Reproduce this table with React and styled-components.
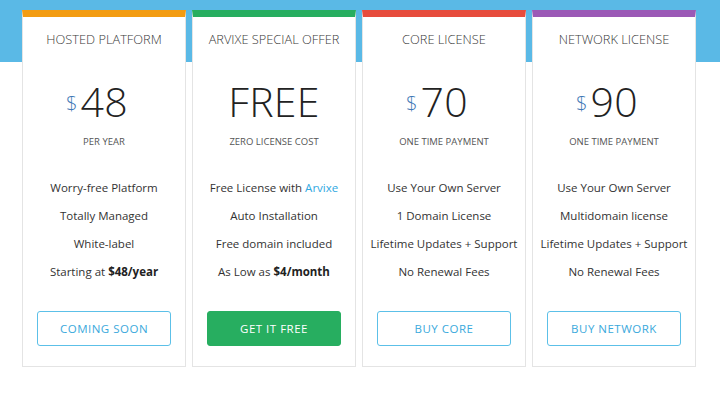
import React from "react";
import styled, { createGlobalStyle } from "styled-components";

const Global = createGlobalStyle`
  html, body { margin: 0; padding: 0; background: #fff; }
  body { font-family: "Open Sans", "Liberation Sans", sans-serif; }
`;

const Page = styled.div`
  width: 720px;
  height: 395px;
  background: linear-gradient(to bottom, #5ab9e6 0, #5ab9e6 62px, #ffffff 62px);
  padding: 10px 0 0 22px;
  box-sizing: border-box;
`;

const Row = styled.div`
  display: flex;
  gap: 6px;
  align-items: flex-start;
`;

const Card = styled.div`
  width: 164px;
  height: 357px;
  box-sizing: border-box;
  background: #fff;
  border: 1px solid #e4e4e4;
  border-top: 7px solid ${(p) => p.$accent};
  display: flex;
  flex-direction: column;
  align-items: center;
  padding: 0 14px;
`;

const Title = styled.div`
  margin-top: 13px;
  font-size: 12.8px;
  font-weight: 300;
  color: #3a3a3a;
  line-height: 18px;
  white-space: nowrap;
`;

const Price = styled.div`
  margin-top: 27px;
  display: flex;
  align-items: center;
  height: 52px;
  color: #222;
`;

const Currency = styled.span`
  font-size: 20px;
  font-weight: 300;
  color: #3f77b5;
  margin-top: 5px;
  margin-left: -14px;
  margin-right: 3px;
`;

const Amount = styled.span`
  font-size: 41px;
  font-weight: 300;
  line-height: 52px;
  letter-spacing: 0.3px;
`;

const Sub = styled.div`
  margin-top: 9px;
  font-size: 9.5px;
  color: #555;
  text-transform: uppercase;
  line-height: 12px;
`;

const Features = styled.ul`
  list-style: none;
  margin: 31px 0 0;
  padding: 0;
  display: flex;
  flex-direction: column;
  gap: 11px;
  align-items: center;
`;

const Feature = styled.li`
  font-size: 11.5px;
  line-height: 17px;
  color: #333;
  white-space: nowrap;
  b { font-weight: 700; color: #222; }
`;

const Link = styled.a`
  color: #2fa8df;
  text-decoration: none;
`;

const Button = styled.button`
  margin-top: 31px;
  width: 134px;
  height: 35px;
  box-sizing: border-box;
  border-radius: 3px;
  font-family: "Open Sans", "Liberation Sans", sans-serif;
  font-size: 11.5px;
  letter-spacing: 0.5px;
  text-transform: uppercase;
  cursor: pointer;
  border: 1px solid ${(p) => (p.$solid ? "#27ae60" : "#5cc0e8")};
  background: ${(p) => (p.$solid ? "#27ae60" : "#fff")};
  color: ${(p) => (p.$solid ? "#fff" : "#3aa9dc")};
`;

const plans = [
  {
    accent: "#f39c12",
    title: "HOSTED PLATFORM",
    currency: "$",
    amount: "48",
    sub: "PER YEAR",
    features: [
      "Worry-free Platform",
      "Totally Managed",
      "White-label",
      <>Starting at <b>$48/year</b></>,
    ],
    button: "Coming Soon",
  },
  {
    accent: "#27ae60",
    title: "ARVIXE SPECIAL OFFER",
    amount: "FREE",
    sub: "ZERO LICENSE COST",
    features: [
      <>Free License with <Link href="#">Arvixe</Link></>,
      "Auto Installation",
      "Free domain included",
      <>As Low as <b>$4/month</b></>,
    ],
    button: "Get It Free",
    solid: true,
  },
  {
    accent: "#e74c3c",
    title: "CORE LICENSE",
    currency: "$",
    amount: "70",
    sub: "ONE TIME PAYMENT",
    features: [
      "Use Your Own Server",
      "1 Domain License",
      "Lifetime Updates + Support",
      "No Renewal Fees",
    ],
    button: "Buy Core",
  },
  {
    accent: "#9b59b6",
    title: "NETWORK LICENSE",
    currency: "$",
    amount: "90",
    sub: "ONE TIME PAYMENT",
    features: [
      "Use Your Own Server",
      "Multidomain license",
      "Lifetime Updates + Support",
      "No Renewal Fees",
    ],
    button: "Buy Network",
  },
];

export default function App() {
  return (
    <>
      <Global />
      <Page>
        <Row>
          {plans.map((p) => (
            <Card key={p.title} $accent={p.accent}>
              <Title>{p.title}</Title>
              <Price>
                {p.currency && <Currency>{p.currency}</Currency>}
                <Amount>{p.amount}</Amount>
              </Price>
              <Sub>{p.sub}</Sub>
              <Features>
                {p.features.map((f, i) => (
                  <Feature key={i}>{f}</Feature>
                ))}
              </Features>
              <Button $solid={p.solid}>{p.button}</Button>
            </Card>
          ))}
        </Row>
      </Page>
    </>
  );
}
